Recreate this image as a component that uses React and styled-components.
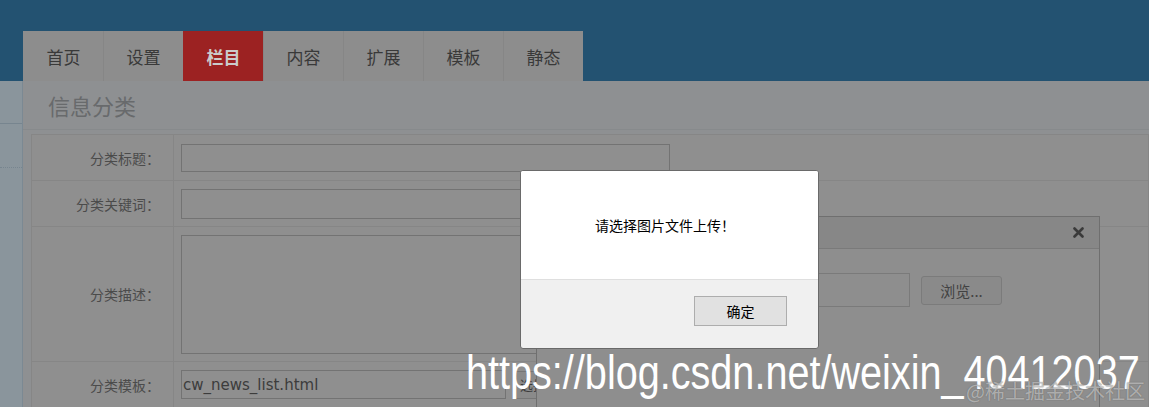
import React from "react";
import styled, { createGlobalStyle } from "styled-components";

const GlobalStyle = createGlobalStyle`
  html, body {
    margin: 0;
    padding: 0;
    background: #8e9092;
    font-family: "Noto Sans CJK SC", "Liberation Sans", sans-serif;
  }
`;

const Page = styled.div`
  position: relative;
  width: 1149px;
  height: 407px;
  overflow: hidden;
  background: #8e9092;
`;

const Header = styled.div`
  height: 81px;
  background: #235271;
  display: flex;
  align-items: flex-end;
  padding-left: 23px;
  box-sizing: border-box;
`;

const TabBar = styled.div`
  display: flex;
  background: #8d8d8d;
`;

const Tab = styled.div`
  width: 80px;
  height: 50px;
  display: flex;
  align-items: center;
  justify-content: center;
  font-size: 17px;
  color: ${(p) => (p.$active ? "#cbcbcb" : "#393939")};
  font-weight: ${(p) => (p.$active ? "bold" : "normal")};
  background: ${(p) => (p.$active ? "#9c2222" : "transparent")};
  box-sizing: border-box;
  border-left: 1px solid ${(p) => (p.$first || p.$active ? "transparent" : "#868686")};
`;

const Body = styled.div`
  display: flex;
  height: 326px;
`;

const Sidebar = styled.div`
  width: 22px;
  background: #8a959c;
  border-right: 1px solid #7b8993;
`;

const SideItem = styled.div`
  height: ${(p) => p.$h}px;
  border-bottom: 1px ${(p) => (p.$dotted ? "dotted" : "solid")} #77858f;
`;

const Main = styled.div`
  flex: 1;
  min-width: 0;
  background: #8e9092;
`;

const Title = styled.div`
  height: 48px;
  padding-left: 25px;
  display: flex;
  align-items: center;
  font-size: 22px;
  color: #686a6c;
  border-bottom: 1px solid #878a8c;
`;

const Table = styled.table`
  margin: 4px 0 0 8px;
  width: calc(100% - 8px);
  border-collapse: collapse;
  background: #8f8f8f;
`;

const Row = styled.tr`
  height: ${(p) => p.$h}px;
`;

const Label = styled.td`
  width: 128px;
  padding: 0 13px 0 0;
  text-align: right;
  font-size: 14px;
  color: #4b4b4b;
  border: 1px solid #868686;
`;

const Cell = styled.td`
  padding: 0 0 0 7px;
  border: 1px solid #868686;
  vertical-align: middle;
`;

const Field = styled.div`
  display: flex;
  align-items: center;
`;

const Input = styled.div`
  width: ${(p) => p.$w}px;
  height: ${(p) => p.$h}px;
  box-sizing: border-box;
  border: 1px solid #737373;
  font-family: "DejaVu Sans", sans-serif;
  font-size: 15px;
  color: #3c3c3c;
  display: flex;
  align-items: center;
  padding-left: 1px;
`;

const SmallButton = styled.div`
  margin-left: 7px;
  height: 28px;
  padding: 0 6px;
  box-sizing: border-box;
  border: 1px solid #767676;
  background: #8a8a8a;
  font-size: 13px;
  color: #3c3c3c;
  display: flex;
  align-items: center;
`;

const UploadDialog = styled.div`
  position: absolute;
  left: 536px;
  top: 216px;
  width: 564px;
  height: 230px;
  box-sizing: border-box;
  border: 1px solid #6f6f6f;
  background: #8e8e8e;
`;

const UploadHead = styled.div`
  height: 31px;
  background: #878787;
  border-bottom: 1px solid #7a7a7a;
  display: flex;
  align-items: center;
  justify-content: flex-end;
  padding-right: 15px;
`;

const UploadBody = styled.div`
  display: flex;
  align-items: center;
  gap: 11px;
  padding: 24px 97px 0 80px;
`;

const FileBox = styled.div`
  flex: 1;
  height: 34px;
  box-sizing: border-box;
  border: 1px solid #7a7a7a;
`;

const BrowseButton = styled.div`
  width: 81px;
  height: 29px;
  box-sizing: border-box;
  border: 1px solid #7b7b7b;
  border-radius: 3px;
  background: #8a8a8a;
  display: flex;
  align-items: center;
  justify-content: center;
  font-size: 15px;
  color: #424242;
`;

const Alert = styled.div`
  position: absolute;
  left: 520px;
  top: 170px;
  width: 299px;
  height: 179px;
  box-sizing: border-box;
  border: 1px solid #6a6a6a;
  border-radius: 3px;
  overflow: hidden;
  display: flex;
  flex-direction: column;
  background: #f0f0f0;
`;

const AlertMessage = styled.div`
  height: 108px;
  background: #ffffff;
  display: flex;
  align-items: center;
  padding-left: 74px;
  font-size: 14px;
  color: #000;
`;

const AlertFooter = styled.div`
  flex: 1;
  border-top: 1px solid #dfdfdf;
  display: flex;
  justify-content: flex-end;
  align-items: flex-start;
  padding: 16px 31px 0 0;
`;

const OkButton = styled.div`
  width: 93px;
  height: 30px;
  box-sizing: border-box;
  border: 1px solid #adadad;
  background: #e1e1e1;
  display: flex;
  align-items: center;
  justify-content: center;
  font-size: 14px;
  color: #000;
`;

const Watermark = styled.div`
  position: absolute;
  left: 466px;
  top: 349px;
  font-family: "Liberation Sans", Arial, sans-serif;
  font-size: 48px;
  line-height: 48px;
  color: #ffffff;
  white-space: nowrap;
  transform: scaleX(0.825);
  transform-origin: left top;
`;

const Credit = styled.div`
  position: absolute;
  right: 4px;
  bottom: 5px;
  font-size: 20px;
  line-height: 22px;
  color: rgba(225, 225, 225, 0.6);
  text-shadow: 0 0 1px rgba(60, 60, 60, 0.6);
  white-space: nowrap;
`;

const CloseIcon = () => (
  <svg width="11" height="11" viewBox="0 0 11 11">
    <path d="M1.5 1.5 L9.5 9.5 M9.5 1.5 L1.5 9.5" stroke="#3a3a3a" strokeWidth="2.6" strokeLinecap="round" />
  </svg>
);

const tabs = ["首页", "设置", "栏目", "内容", "扩展", "模板", "静态"];

export default function App() {
  return (
    <Page>
      <GlobalStyle />
      <Header>
        <TabBar>
          {tabs.map((t, i) => (
            <Tab key={t} $first={i === 0} $active={t === "栏目"}>
              {t}
            </Tab>
          ))}
        </TabBar>
      </Header>
      <Body>
        <Sidebar>
          <SideItem $h={42} />
          <SideItem $h={43} $dotted />
        </Sidebar>
        <Main>
          <Title>信息分类</Title>
          <Table>
            <tbody>
              <Row $h={46}>
                <Label>分类标题：</Label>
                <Cell>
                  <Input $w={489} $h={28} />
                </Cell>
              </Row>
              <Row $h={46}>
                <Label>分类关键词：</Label>
                <Cell>
                  <Input $w={489} $h={30} />
                </Cell>
              </Row>
              <Row $h={135}>
                <Label>分类描述：</Label>
                <Cell>
                  <Input $w={489} $h={119} />
                </Cell>
              </Row>
              <Row $h={46}>
                <Label>分类模板：</Label>
                <Cell>
                  <Field>
                    <Input $w={325} $h={29}>cw_news_list.html</Input>
                    <SmallButton>选择</SmallButton>
                  </Field>
                </Cell>
              </Row>
            </tbody>
          </Table>
        </Main>
      </Body>

      <UploadDialog>
        <UploadHead>
          <CloseIcon />
        </UploadHead>
        <UploadBody>
          <FileBox />
          <BrowseButton>浏览...</BrowseButton>
        </UploadBody>
      </UploadDialog>

      <Alert>
        <AlertMessage>请选择图片文件上传！</AlertMessage>
        <AlertFooter>
          <OkButton>确定</OkButton>
        </AlertFooter>
      </Alert>

      <Watermark>https://blog.csdn.net/weixin_40412037</Watermark>
      <Credit>@稀土掘金技术社区</Credit>
    </Page>
  );
}
